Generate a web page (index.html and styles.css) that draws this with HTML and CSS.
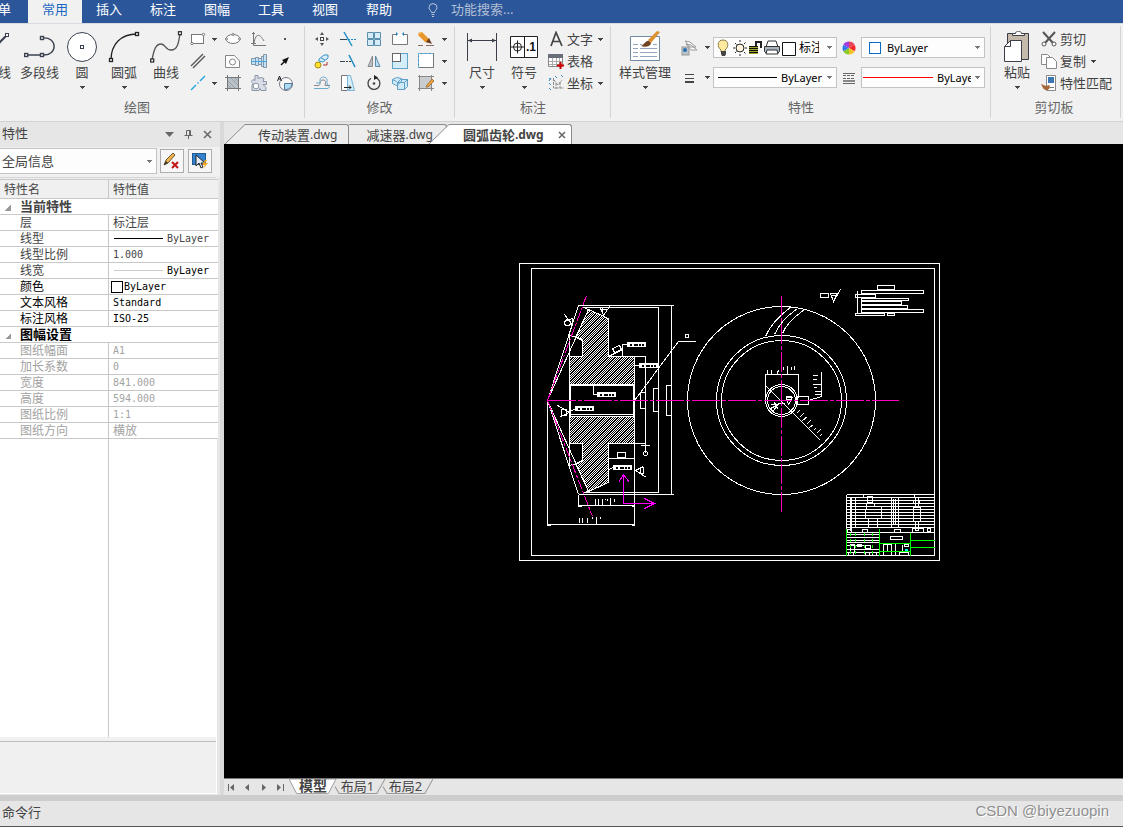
FILE: index.html
```html
<!DOCTYPE html>
<html lang="zh-CN">
<head>
<meta charset="utf-8">
<title>圆弧齿轮.dwg</title>
<link rel="stylesheet" href="styles.css">
</head>
<body>
<svg class="defs" aria-hidden="true">
  <symbol id="caret" viewBox="0 0 5 3"><path d="M0 0h5v1h-1v1h-1v1h-1v-1h-1v-1h-1z" fill="currentColor"/></symbol>
</svg>
<header class="menubar">
  <nav class="menu" aria-label="菜单">
    <button class="menu-item menu-file">单</button>
    <button class="menu-item active">常用</button>
    <button class="menu-item">插入</button>
    <button class="menu-item">标注</button>
    <button class="menu-item">图幅</button>
    <button class="menu-item">工具</button>
    <button class="menu-item">视图</button>
    <button class="menu-item">帮助</button>
  </nav>
  <label class="search">
    <svg width="10" height="14" viewBox="0 0 10 14" fill="none" stroke="#b9c4d8"><path d="M3.5 9.5C3.5 7.5 1 7 1 4.600A4 4 0 0 1 9 4.600C9 7 6.500 7.500 6.500 9.500zM3.500 11.500h3M4 13.500h2"/></svg>
    <input type="text" placeholder="功能搜索..." aria-label="功能搜索">
  </label>
</header>

<section class="ribbon">
  <div class="group group-draw">
    <div class="tools">
      <button class="big first-line"><svg width="32" height="32" fill="none" stroke="#3b4350"><path d="M2 30L28 4" stroke-width="2"/><rect x="26.500" y="2.500" width="3" height="3" fill="#fff"/></svg><span>线</span></button>
      <button class="big wide-line"><svg width="32" height="32" fill="none" stroke="#3b4350" stroke-width="1.400"><path d="M18 7C34 5 34 25 19 24H3"/><g fill="#fff"><rect x="16.500" y="5.500" width="3" height="3"/><rect x="16.500" y="22.500" width="3" height="3"/><rect x="0.700" y="22.500" width="3" height="3"/></g></svg><span>多段线</span></button>
      <button class="big"><svg width="32" height="32" fill="#fff" stroke="#3b4350"><circle cx="16" cy="16" r="14.500"/><rect x="14.500" y="14.500" width="3" height="3"/></svg><span>圆</span><svg class="caret"><use href="#caret"/></svg></button>
      <button class="big"><svg width="32" height="32" fill="none" stroke="#222" stroke-width="1.300"><path d="M3 29C3 13 13 3 29 3"/><g fill="#fff"><rect x="27.500" y="1.500" width="3" height="3"/><rect x="1.500" y="27.500" width="3" height="3"/></g></svg><span>圆弧</span><svg class="caret"><use href="#caret"/></svg></button>
      <button class="big"><svg width="32" height="32" fill="none" stroke="#555" stroke-width="1.300"><path d="M2 29C4 18 6 13 11 13C16 13 15 19 21 19C28 19 29 10 30 2"/><g fill="#fff" stroke="#333"><rect x="28.500" y="0.700" width="3" height="3"/><rect x="0.700" y="28" width="3" height="3"/></g></svg><span>曲线</span><svg class="caret"><use href="#caret"/></svg></button>
      <div class="icons icons-draw">
        <button aria-label="矩形"><svg width="16" height="16" fill="#fff" stroke="#777"><rect x="1.500" y="3.500" width="12" height="9"/><circle cx="13.500" cy="3.500" r="1.200"/><circle cx="2" cy="12.500" r="1.200"/></svg></button>
        <button aria-label="矩形选项"><svg class="caret"><use href="#caret"/></svg></button>
        <button aria-label="椭圆"><svg width="16" height="16" fill="#fff" stroke="#777"><ellipse cx="8" cy="8" rx="7" ry="4.500"/><circle cx="8" cy="3.500" r="1"/><circle cx="1.500" cy="8" r="1"/><circle cx="14.500" cy="8" r="1"/></svg></button>
        <button aria-label="函数曲线"><svg width="16" height="16" fill="none" stroke="#777"><path d="M2.500 1v13.500H15M0 12.500h5M1 2.500h3M3 12C5 1 9 3 13 10"/></svg></button>
        <button aria-label="点"><svg width="16" height="16"><rect x="7" y="7" width="2" height="2" fill="#555"/></svg></button>

        <button aria-label="平行线"><svg width="16" height="16" fill="none" stroke="#555" stroke-width="1.400"><path d="M1 13L13 1M3 15L15 3"/></svg></button>
        <span></span>
        <button aria-label="轮廓孔"><svg width="16" height="16" fill="#fff" stroke="#888"><path d="M.500 2.500v12h14V8L9.500 2.500z"/><circle cx="7.500" cy="9" r="3"/></svg></button>
        <button aria-label="轴孔"><svg width="16" height="16" fill="#c4e2f6" stroke="#8296aa"><path d="M.500 5.500h4v6h-4zM4.500 4.500h3v8h-3zM7.500 5.500h3v6h-3zM10.500 3.500h2v10h-2zM12.500 1.500h3v13h-3z"/><path d="M0 8.500h16" stroke="#4aa5df"/></svg></button>
        <button aria-label="箭头"><svg width="16" height="16"><path d="M4 12L9 7" stroke="#111" stroke-width="1.500"/><path d="M12 4l-7 3 4 4z" fill="#111"/></svg></button>

        <button aria-label="中心线"><svg width="16" height="16" stroke="#23a3dd" stroke-width="1.400"><path d="M1 15L6 10M7.500 8.500l1-1M10 6l5-5"/></svg></button>
        <button aria-label="中心线选项"><svg class="caret"><use href="#caret"/></svg></button>
        <button aria-label="剖面线"><svg width="16" height="16" fill="#b9c2c8" stroke="#777"><rect x="2.500" y="2.500" width="11" height="11"/><path d="M0 2.500h16M0 13.500h16M2.500 0v16M13.500 0v16"/><path d="M3 6l7 7M6 3l7 7M3 10l3 3M10 3l3 3" stroke="#959fa6"/></svg></button>
        <button aria-label="齿轮"><svg width="16" height="16" fill="#d8dde8" stroke="#8b94a3"><path d="M4 .500h3v3l3-1 3 1-1 3h3.500v3H12l3 3v3h-5l-1-2-1 2H1v-5l1-2-2-2 2-2 2 1z"/><circle cx="5" cy="11" r="2.800" fill="#fff"/></svg></button>
        <button aria-label="局部放大"><svg width="16" height="16" fill="#f8f8f8" stroke="#778"><circle cx="9" cy="9" r="6.500"/><path d="M7.500 8.500h7.500c0 4-4 6.500-7.500 6z" fill="#addcf5" stroke="#579"/><path d="M.500 6l2-5 2 5M1.500 4h2" fill="none" stroke="#222"/></svg></button>
      </div>
    </div>
    <h2>绘图</h2>
  </div>

  <div class="group group-modify">
    <div class="tools">
      <div class="icons icons-modify">
        <button aria-label="平移"><svg width="16" height="16" fill="#555"><path d="M6 4l2-3 2 3zM6 12l2 3 2-3zM4 6L1 8l3 2zM12 6l3 2-3 2z"/><rect x="6.500" y="6.500" width="3" height="3" fill="#fff" stroke="#444"/></svg></button>
        <button aria-label="裁剪"><svg width="16" height="16" stroke="#1d8dc7" fill="none"><path d="M4 1l8 14" stroke-width="1.500"/><path d="M0 8.500h7" stroke="#345"/><path d="M8 8.500h8" stroke-dasharray="2 1"/></svg></button>
        <button aria-label="阵列"><svg width="16" height="16" fill="#d7ecf8" stroke="#5b8fae"><path d="M1.500 1.500h6v6h-6zM8.500 1.500h6v6h-6zM1.500 8.500h6v6h-6zM8.500 8.500h6v6h-6z"/></svg></button>
        <button aria-label="打断"><svg width="16" height="16" fill="#fff" stroke="#777"><path d="M4 3.500H.500v10h15v-10H12"/><path d="M4 1v4l2-2zM12 1v4l-2-2z" fill="#1a7fc0" stroke="none"/></svg></button>
        <button aria-label="删除"><svg width="16" height="16"><path d="M1 1l3 0 8 8-2 3-3-1L0 4z" fill="#e9962b"/><path d="M8 11l3-4 3 6z" fill="#6b3f22"/><path d="M0 4l1-3h3" fill="#f3c782"/><path d="M0 14.500h5M8 14.500h8" stroke="#8b6c62"/></svg></button>
        <button aria-label="删除选项"><svg class="caret"><use href="#caret"/></svg></button>

        <button aria-label="平移复制"><svg width="16" height="16" fill="none"><circle cx="4" cy="12" r="3" fill="#ffe02d" stroke="#a98b13"/><path d="M5 6l5-4 4 0 0 3-5 4-4-1zM7 5l4 2" fill="#d7eefa" stroke="#3b93c4"/><path d="M9 12h4V9" stroke="#a33"/></svg></button>
        <button aria-label="延伸"><svg width="16" height="16" fill="none"><path d="M0 8.500h5" stroke="#345"/><path d="M6 8.500h6" stroke="#345" stroke-dasharray="2 1"/><path d="M9 2l6 12" stroke="#1d8dc7" stroke-width="1.500"/></svg></button>
        <button aria-label="镜像"><svg width="16" height="16"><path d="M6.500 3v10.500H2z" fill="#bcc3ca" stroke="#888"/><path d="M9.500 3v10.500H14z" fill="#b9dcf0" stroke="#5c8baa"/></svg></button>
        <button aria-label="缩放"><svg width="16" height="16"><rect x=".5" y=".5" width="15" height="15" fill="#d3edfa" stroke="#61a3c9"/><rect x=".5" y=".5" width="8" height="8" fill="#fff" stroke="#666"/></svg></button>
        <button aria-label="矩形边"><svg width="16" height="16"><rect x=".5" y=".5" width="15" height="14" fill="#fff" stroke="#777"/><path d="M0 .5h16M.5 0v15" stroke="#5bb5e5" stroke-dasharray="3 1"/></svg></button>
        <button aria-label="边选项"><svg class="caret"><use href="#caret"/></svg></button>

        <button aria-label="等距线"><svg width="16" height="16" fill="none"><path d="M0 10.500h5C7 9 5 5 9 5s2 4 2 5.500h5" stroke="#888"/><path d="M0 13.500h13c3 0 3-4 0-4V5c0-4-7-4-7 0v3H2" stroke="#6aaace"/></svg></button>
        <button aria-label="拉伸"><svg width="16" height="16"><path d="M1.500.500h6v15h-6z" fill="#fff" stroke="#777"/><path d="M7.500.500h3l4 15h-7z" fill="#d3edfa" stroke="#79b5d7"/><path d="M4 12.500h7M9 10.500l2 2-2 2" stroke="#222" fill="none"/></svg></button>
        <button aria-label="旋转"><svg width="16" height="16" fill="none" stroke="#444" stroke-width="1.300"><path d="M9 2.500a6 6 0 1 1-4 .700"/><path d="M8 0l4 2.500L8 5z" fill="#222" stroke="none"/><circle cx="8" cy="8.500" r=".7"/></svg></button>
        <button aria-label="三维"><svg width="16" height="16" fill="#cfe9f7" stroke="#5d9fc6"><path d="M.500 4.500l4-2 5 1v3l-5 4-4-2zM5.500 7.500l3-3h7v7l-3 3h-7z"/><path d="M5.500 7.500h7l3-3M12.500 7.500v7M.500 4.500l4 2" fill="none"/></svg></button>
        <button aria-label="填充编辑"><svg width="16" height="16"><rect x="1.500" y="1.500" width="12" height="12" fill="#c9cdd0" stroke="#666"/><path d="M0 1.500h16M0 13.500h16M1.500 0v16M13.500 0v16" stroke="#888"/><path d="M9 10l5-6 2 2-6 6-2 0z" fill="#eba43e" stroke="#a87840"/></svg></button>
        <button aria-label="填充选项"><svg class="caret"><use href="#caret"/></svg></button>
      </div>
    </div>
    <h2>修改</h2>
  </div>

  <div class="group group-dim">
    <div class="tools">
      <button class="big"><svg width="32" height="32" stroke="#3a3f48" fill="#3a3f48"><path d="M1.500 2v28M30.500 2v28M2 9.500h28"/><path d="M2 9.500l4-2v4zM30 9.500l-4-2v4z" stroke="none"/></svg><span>尺寸</span><svg class="caret"><use href="#caret"/></svg></button>
      <button class="big"><svg width="32" height="32" fill="#fff" stroke="#222"><path d="M2.500 5.500h27v21h-27zM16.500 5.500v21"/><circle cx="9.500" cy="16" r="4"/><path d="M3 16h13M9.500 9.500v13"/><text class="dot-one" x="18" y="20" stroke="none" fill="#111">.1</text></svg><span>符号</span><svg class="caret"><use href="#caret"/></svg></button>
      <div class="list">
        <button><svg width="16" height="16" fill="none" stroke="#444" stroke-width="1.700"><path d="M3 15L8 1.500 14 15M5 10.500h7"/></svg>文字<svg class="caret"><use href="#caret"/></svg></button>
        <button><svg width="16" height="16"><path d="M.500 1.500h14v12h-14z" fill="#fff" stroke="#888"/><path d="M0 1h15v4H0z" fill="#686e78"/><path d="M1 8.500h13M1 11.500h13M4.500 5v8M8.500 5v8M11.500 5v8" stroke="#aaa"/><path d="M12.500 9v7M9 12.500h7" stroke="#c00" stroke-width="2"/></svg>表格</button>
        <button><svg width="16" height="16" fill="none" stroke="#888"><path d="M5.500 3v10H16M6 5l4 5 4-5M8 8v6M12 7v6" stroke-dasharray="3 1"/><path d="M1 3l2 2M3 3L1 6M7 1l2 2M13 0l2 2M1 8l2 2M1 13l2 2" stroke="#3c8fc6"/></svg>坐标<svg class="caret"><use href="#caret"/></svg></button>
      </div>
    </div>
    <h2>标注</h2>
  </div>

  <div class="group group-props">
    <div class="tools">
      <button class="big style-btn"><svg width="32" height="32"><path d="M1.500 5.500h29v24h-29z" fill="#fff" stroke="#718ba5"/><path d="M4 13.500h5M4 17.500h5M4 21.500h5M4 25.500h5M11 21.500h17M11 25.500h17M11 17.500h17M11 13.500h2M24 13.500h4" stroke="#94a5bd"/><path d="M28 0l3 1-9 11-3-3z" fill="#dc9132"/><path d="M12 15c3-1 5-6 8-5l2 2c0 3-6 5-10 3z" fill="#714523"/></svg><span>样式管理</span><svg class="caret"><use href="#caret"/></svg></button>
      <div class="combo-grid">
        <button aria-label="图层"><svg width="16" height="16"><path d="M4 1l5 1 6 5-6 0zM5 4l5 1 6 5h-6z" fill="#fff" stroke="#999"/><rect x="1" y="7" width="7" height="8" fill="#b9c3cc" stroke="#999"/><circle cx="4" cy="10" r="2" fill="#2b6fae"/></svg></button>
        <button aria-label="图层选项"><svg class="caret"><use href="#caret"/></svg></button>
        <div class="combo">
          <svg width="82" height="18">
            <path d="M7 11C3 8 3 1 9 1s6 7 2 10v2H7z" fill="#ffeaa0" stroke="#8b7c46"/><path d="M7 12h5v3l-1 2H8l-1-2z" fill="#444"/>
            <g stroke="#222"><circle cx="26" cy="9" r="4" fill="#fff4dd"/><path d="M26 1v2M26 15v2M19 9h2M31 9h2M21 4l1.500 1.500M30 13l1.500 1.500M21 14l1.500-1.500M30 5l1.500-1.500"/></g>
            <path d="M35 7h9v8h-9z" fill="#a0a52a"/><path d="M35 7.500h9M35 9.500h9M35 11.500h9M35 13.500h9" stroke="#111"/><path d="M42 7V3h5v6" stroke="#222" stroke-width="2" fill="none"/>
            <g stroke="#333"><path d="M54 2h8l2 6H52z" fill="#fff"/><path d="M50.500 7.500h15v5l-2 2h-11l-2-2z" fill="#a9b4bf"/><path d="M53 11h10l1 4H52z" fill="#fff"/></g>
            <path d="M68.500 3.500h13v13h-13z" fill="#fff" stroke="#111"/>
          </svg>
          <select class="layer-name" aria-label="当前图层"><option>标注层</option></select><svg class="caret"><use href="#caret"/></svg>
        </div>
        <svg class="mid" width="16" height="16"><g stroke="none"><path d="M8 8V1.500a6.500 6.500 0 0 1 5.600 3.250z" fill="#e8445b"/><path d="M8 8l5.600-3.250a6.500 6.500 0 0 1 0 6.500z" fill="#f3262b"/><path d="M8 8l5.600 3.250A6.500 6.500 0 0 1 8 14.500z" fill="#f5c326"/><path d="M8 8v6.500a6.500 6.500 0 0 1-5.600-3.250z" fill="#8bcc28"/><path d="M8 8l-5.600 3.250a6.500 6.500 0 0 1 0-6.500z" fill="#3279e8"/><path d="M8 8L2.400 4.750A6.500 6.500 0 0 1 8 1.500z" fill="#a23be0"/></g></svg>
        <div class="combo color-combo"><i class="swatch"></i><select aria-label="颜色"><option>ByLayer</option></select><svg class="caret"><use href="#caret"/></svg></div>

        <button aria-label="线型"><svg width="16" height="16" stroke="#444"><path d="M4 4.500h9M4 8.500h9" /><path d="M4 12h9" stroke-width="2"/></svg></button>
        <button aria-label="线型选项"><svg class="caret"><use href="#caret"/></svg></button>
        <div class="combo line-combo"><i class="line line-black"></i><select aria-label="当前线型"><option>ByLayer</option></select><svg class="caret"><use href="#caret"/></svg></div>
        <svg class="mid" width="16" height="16" stroke="#666"><path d="M2 3.500h12M2 13.500h12" stroke-width="1"/><path d="M2 5.500h12M2 8.500h12" stroke-dasharray="3 1"/><path d="M2 11h12" stroke-width="2" stroke="#888"/></svg>
        <div class="combo weight-combo"><i class="line line-red"></i><select aria-label="线宽"><option>ByLayer</option></select><svg class="caret"><use href="#caret"/></svg></div>
      </div>
    </div>
    <h2>特性</h2>
  </div>

  <div class="group group-clip">
    <div class="tools">
      <button class="big"><svg width="32" height="32" stroke="#3a3f48"><path d="M6.500 2.500h21v26h-21z" fill="#c5b9ac"/><path d="M11.500 4.500v-2h3c0-3 6-3 6 0h3v2z" fill="#fff"/><path d="M9.500 9.500h11v21h-17v-15z" fill="#fff"/><path d="M9.500 9.500v6h-6" fill="none"/></svg><span>粘贴</span><svg class="caret"><use href="#caret"/></svg></button>
      <div class="list">
        <button><svg width="16" height="16" fill="#fff" stroke="#555"><path d="M2 1l10 11M14 1L4 12" stroke-width="2"/><circle cx="3" cy="13" r="2"/><circle cx="13" cy="13" r="2"/></svg>剪切</button>
        <button><svg width="16" height="16" fill="#fff" stroke="#888"><path d="M.500 1.500h6l3 3v7h-9z"/><path d="M5.500 4.500h6l4 4v7h-10z"/></svg>复制<svg class="caret"><use href="#caret"/></svg></button>
        <button><svg width="16" height="16"><path d="M5.500.500h9v15h-9z" fill="#fff" stroke="#888"/><path d="M7 2h6v6H7z" fill="#3b77b4"/><path d="M9 12.500h4" stroke="#777"/><path d="M0 9l5 2 3-1 1 2c-1 4-5 4-7 1z" fill="#a6683a"/></svg>特性匹配</button>
      </div>
    </div>
    <h2>剪切板</h2>
  </div>
</section>

<main class="workspace">
  <aside class="panel">
    <div class="panel-head">
      <h1>特性</h1>
      <button aria-label="菜单"><svg width="9" height="5"><path d="M0 0h9L4.500 5z" fill="#666"/></svg></button>
      <button aria-label="固定"><svg width="9" height="9" fill="none" stroke="#666"><path d="M2.500.500h4v5h-4zM.500 5.500h8M4.500 6v3M5.500 1v4"/></svg></button>
      <button aria-label="关闭"><svg width="9" height="9" stroke="#666" stroke-width="1.500"><path d="M1 1l7 7M8 1L1 8"/></svg></button>
    </div>
    <div class="panel-tools">
      <div class="combo scope"><select aria-label="选择范围"><option>全局信息</option></select><svg class="caret"><use href="#caret"/></svg></div>
      <button aria-label="清除选择"><svg width="18" height="18"><path d="M1 13l2-5 7-7 2 2-7 8z" fill="#efb54b" stroke="#6d5430"/><path d="M1 13l2-4 2 2z" fill="#333"/><path d="M9 10l6 6M15 10l-6 6" stroke="#c01818" stroke-width="2"/></svg></button>
      <button aria-label="拾取"><svg width="18" height="18"><rect x="1.500" y="1.500" width="13" height="11" fill="#3382cf" stroke="#225a92"/><path d="M5 3v11l3-3 2 5 2-1-2-4h4z" fill="#e4eef9" stroke="#222"/><path d="M14 8l-3 5h3l-2 4 5-6h-3l2-3z" fill="#f4a31c"/></svg></button>
    </div>
    <div class="props">
      <table>
        <thead><tr><th>特性名</th><th>特性值</th></tr></thead>
        <tbody>
          <tr class="section"><th colspan="2"><i></i>当前特性</th></tr>
          <tr><th>层</th><td>标注层</td></tr>
          <tr><th>线型</th><td><span class="sample"><i></i><b>ByLayer</b></span></td></tr>
          <tr><th>线型比例</th><td><b>1.000</b></td></tr>
          <tr class="dark-value"><th>线宽</th><td><span class="sample pale"><i></i><b>ByLayer</b></span></td></tr>
          <tr class="dark"><th>颜色</th><td><span class="color"><i></i><b>ByLayer</b></span></td></tr>
          <tr class="dark"><th>文本风格</th><td><b>Standard</b></td></tr>
          <tr class="dark"><th>标注风格</th><td><b>ISO-25</b></td></tr>
        </tbody>
        <tbody class="muted">
          <tr class="section dark"><th colspan="2"><i></i>图幅设置</th></tr>
          <tr><th>图纸幅面</th><td><b>A1</b></td></tr>
          <tr><th>加长系数</th><td><b>0</b></td></tr>
          <tr><th>宽度</th><td><b>841.000</b></td></tr>
          <tr><th>高度</th><td><b>594.000</b></td></tr>
          <tr><th>图纸比例</th><td><b>1:1</b></td></tr>
          <tr><th>图纸方向</th><td>横放</td></tr>
        </tbody>
      </table>
      <div class="filler"><div></div></div>
      <div class="description"></div>
    </div>
  </aside>

  <section class="documents">
    <div class="doc-tabs" role="tablist">
      <button class="doc-tab" role="tab"><svg width="20" height="20"><path d="M0 20L20 .500V20z" fill="#ededed"/><path d="M0 20L20 .500" stroke="#8c8c8c"/></svg><span>传动装置<small>.dwg</small></span></button>
      <button class="doc-tab second" role="tab"><span>减速器<small>.dwg</small></span></button>
      <button class="doc-tab current" role="tab"><svg width="20" height="20"><path d="M0 20L20 .500V20z" fill="#fff"/><path d="M0 20L20 .500" stroke="#8c8c8c"/></svg><span>圆弧齿轮<small>.dwg</small><svg width="8" height="8" stroke="#666" stroke-width="1.500"><path d="M1 1l6 6M7 1L1 7"/></svg></span></button>
    </div>

    <div class="canvas">
      <svg class="drawing" viewBox="224 144 899 634" fill="none" stroke="#fff" shape-rendering="crispEdges" role="img" aria-label="圆弧齿轮图纸">
        <defs>
          <pattern id="hatch" width="7" height="7" patternUnits="userSpaceOnUse" patternTransform="translate(-.5 -.5)">
            <path fill="#fff" stroke="none" d="M0 0h1v1h-1zM6 1h1v1h-1zM5 2h1v1h-1zM4 3h1v1h-1zM3 4h1v1h-1zM2 5h1v1h-1zM1 6h1v1h-1z"/>
            <path fill="#fff" stroke="none" d="M2 0h1v1h-1zM1 1h1v1h-1zM0 2h1v1h-1zM6 3h1v1h-1zM5 4h1v1h-1zM4 5h1v1h-1zM3 6h1v1h-1zM4 0h1v1h-1zM3 1h1v1h-1zM2 2h1v1h-1zM1 3h1v1h-1zM0 4h1v1h-1zM6 5h1v1h-1zM5 6h1v1h-1z"/>
          </pattern>
          <g id="tag"><rect width="18" height="4" fill="#fff"/><path d="M2 2h2M6 2h4M11 2h2M14 2h2" stroke="#000" stroke-width="2"/></g>
        </defs>
        <g transform="translate(.5 .5)">
          <rect x="519" y="263" width="420" height="297"/><rect x="531" y="268" width="403" height="287"/>
          <!-- gear section -->
          <path fill="url(#hatch)" d="M588 309L608 318V356H634V384H569V356H582V340L575 337z"/>
          <path fill="url(#hatch)" d="M588 491L608 482V443H634V416H569V443H582V460L575 463z"/>
          <path d="M578 305H673M671 305V494M578 494H673M583 307H658V492H583M578 305L547 400L578 494M588 309L547 400L588 491M583 307L588 309M583 492L588 491"/>
          <path d="M569 335V465M569 335L580 338L582 341V356H569M569 465L580 462L582 459V443H569"/>
          <path d="M569 385H634M569 414H634M570 384V415M633 384V415"/>
          <path d="M634 356V524M634 356H645V443H608M608 458H634M608 443V482"/>
          <path d="M645 392H640V408H645M658 388H653V411H658M671 385H666V415H671"/>
          <path d="M634 400L678 341H695M685 334h3v3h-3z"/>
          <path d="M608 356L622 349V344H627M622 344V356M612 348L619 345L621 349L614 352zM634 365H639M593 385V394H597M570 411L575 408M608 469L613 467"/>
          <use href="#tag" x="627" y="342"/><use href="#tag" x="639" y="363"/><use href="#tag" x="597" y="392"/><use href="#tag" x="575" y="406"/><use href="#tag" x="613" y="465"/>
          <circle cx="567" cy="322" r="3"/><path d="M564 314L572 325V318L564 321M600 307L603 315L609 306M599 309H606M602 307V312M557 405L569 412L560 416M561 409H566V415H561zM635 470L646 477M635 470L643 466M640 467H643V473H640z"/>
          <path d="M617 452h8v5h-8zM640 445H649M645 443V452"/><circle cx="645" cy="453" r="2"/>
          <path d="M578 494V506M578 505H634M547 400V525M547 524H634M547 525H550M631 525H634M578 506H581M631 506H634"/>
          <path d="M595 498V504M598 498V504M602 498V504M607 498V500M610 497V504M614 498V501M579 517V522M582 517V522M587 517V522M592 516V518M596 516V524M600 516V518M605 498V499"/>
          <!-- front view -->
          <circle cx="781" cy="400" r="94"/><circle cx="781" cy="400" r="65"/><circle cx="781" cy="400" r="60"/><circle cx="781" cy="400" r="16"/><circle cx="781" cy="400" r="14"/>
          <path d="M765 336Q771 321 791 306M774 334Q780 320 797 308M782 333Q786 322 804 309"/>
          <path d="M765 400V374H798V397M796 396h12v8h-12zM821 371V396L808 400M766 386L820 440"/>
          <path d="M767 369V373M771 369V373M777 370V373M778 369V371M783 366V369M787 365V373M791 366V369M794 365V369M812 375H817M812 379H816M812 384H821M813 387H816M814 391H820M814 394H820"/>
          <path d="M796 413L799 410M799 417L803 413M802 420L807 416M806 424L810 420M809 427L813 424M813 430L815 428M816 433L820 429M819 436L821 434M770 408L778 404L772 411zM774 402L778 409M786 397H792L788 404zM771 404L785 403M786 396h5v3h-5z"/>
          <g stroke="#ff00c0"><path d="M547 400H898" stroke-dasharray="28 2 4 2"/><path d="M781 295V513" stroke-dasharray="20 2 4 2"/><path d="M547 400L586 295M547 400L592 516" stroke-dasharray="10 2 3 2"/></g>
          <g stroke="#ff00ff"><path d="M623 474V503H653M618 482L623 474L629 482M644 498L654 503L644 508"/></g>
          <!-- notes -->
          <path d="M820 293h8v4h-8zM830 293H837L833 301zM833 301L840 289M831 295H836"/>
          <path d="M877 285h17v4h-17zM861 290h62v3h-62zM855 294h20v3h-20zM861 298h47v2h-47zM861 301h40v3h-40zM861 305h46v3h-46zM861 309h62v3h-62zM855 313h29v2h-29zM887 313h7v2h-7zM857 290V312"/>
          <!-- title block -->
          <path d="M846 494H934M846 497H934M846 500H934M846 503H934M846 506H934M846 509H934M846 512H934M846 515H934M846 518H934M846 521H934M846 524H934M846 527H934M846 532H934M846 494V528"/>
          <path d="M850 497V530M851 497V530M855 497V527M863 494V497M867 496h5v6h-5zM866 503V508M865 509V518M881 506V518M868 518V527M877 518V527M874 503V506M891 497V527M893 498V524M895 498V524M898 497V527M914 494V497M913 500h6v3h-6zM915 497h3v9h-3zM913 507h7v14h-7zM915 521h3v9h-3zM912 528h11v4h-11zM927 528h3v3h-3zM894 529h6v3h-6zM862 529h5v3h-5zM847 529h4v3h-4z"/>
          <path d="M846 534H879M846 537H879M846 540H879M846 542H879M846 545H863M846 549H879M846 552H879M890 536h12v3h-12zM850 544h4v8h-4zM848 552h5v3h-5zM857 544h4v2h-4zM865 545h5v3h-5zM865 552h4v3h-4zM872 552h4v3h-4zM883 544h8v11h-8zM887 544V551M895 543V555M902 544V552M899 552h9v3h-9zM904 544h4v2h-4z"/>
          <g stroke="#0f0"><path d="M846 528V555M879 528V555M910 532V555M910 540H934M910 547H934M879 543H910M879 551H910"/><path d="M850 532V555M855 532V555M864 532V555M872 532V555" stroke-dasharray="3 3"/></g>
          <path d="M904 549H907" stroke="#0ff" stroke-width="2"/>
        </g>
      </svg>
    </div>

    <div class="layout-bar">
      <div class="pager">
        <button aria-label="首个"><svg width="8" height="7" fill="#666"><path d="M0 0h1v7H0zM6 0v7L2 3.500z"/></svg></button>
        <button aria-label="上一个"><svg width="8" height="7" fill="#666"><path d="M5 0v7L1 3.500z"/></svg></button>
        <button aria-label="下一个"><svg width="8" height="7" fill="#666"><path d="M2 0v7l4-3.500z"/></svg></button>
        <button aria-label="末个"><svg width="8" height="7" fill="#666"><path d="M1 0v7l4-3.500zM7 0h1v7H7z"/></svg></button>
      </div>
      <button class="layout current"><svg viewBox="0 0 50 17" preserveAspectRatio="none"><path d="M0 0L8 15.500H41L49 0z"/></svg>模型</button>
      <button class="layout"><svg viewBox="0 0 50 17" preserveAspectRatio="none"><path d="M1 8L5 15.500H42L50 0"/></svg>布局1</button>
      <button class="layout"><svg viewBox="0 0 50 17" preserveAspectRatio="none"><path d="M1 8L5 15.500H42L50 0"/></svg>布局2</button>
    </div>
  </section>
</main>

<footer class="command">
  <span>命令行</span>
  <span class="credit">CSDN @biyezuopin</span>
</footer>
</body>
</html>
```
FILE: styles.css
```css
* { box-sizing: border-box; }

body {
  margin: 0;
  height: 100vh;
  display: flex;
  flex-direction: column;
  overflow: hidden;
  background: #f0f0f0;
  color: #444;
  font: 13px/18px "Noto Sans", "Noto Sans CJK SC", sans-serif;
}

button, input, select {
  margin: 0;
  padding: 0;
  border: 0;
  background: none;
  color: inherit;
  font: inherit;
}

button { display: flex; align-items: center; justify-content: center; white-space: nowrap; }
h1, h2 { margin: 0; font: inherit; }
svg { display: block; flex: none; }
.defs { width: 0; height: 0; position: absolute; }
.caret { width: 5px; height: 3px; color: #444; }

/* Menu bar */
.menubar { display: flex; height: 23px; background: #2b579a; color: #fff; }
.menu { display: flex; }
.menu-item { width: 54px; height: 23px; padding-bottom: 6px; }
.menu-file { width: 28px; justify-content: flex-end; padding-right: 17px; }
.menu-item.active { background: #f1f1f1; color: #1a66c0; }
.search { display: flex; align-items: center; gap: 13px; margin-left: 22px; padding-bottom: 4px; }
.search input { width: 160px; height: 18px; padding-bottom: 2px; }
.search input::placeholder { color: #b3bfd4; opacity: 1; }

/* Ribbon */
.ribbon {
  display: flex;
  padding: 2px 0 3px;
  border-top: 1px solid #d8dce2;
  border-bottom: 1px solid #d2d2d2;
  background: #f1f1f1;
}
.group { flex: none; padding-top: 2px; border-right: 1px solid #d4d4d4; }
.group h2 { margin-top: 4px; height: 20px; text-align: center; color: #666; }
.tools { display: flex; height: 66px; }
.group-draw { margin-left: -32px; padding-left: 8px; padding-right: 6px; }
.group-modify { padding-left: 4px; padding-right: 4px; }
.group-dim { padding-left: 6px; padding-right: 5px; }
.group-props { padding-left: 6px; padding-right: 5px; }
.group-clip { padding-left: 5px; padding-right: 8px; }

.big { width: 42px; flex-direction: column; justify-content: flex-start; padding-top: 3px; }
.wide-line { width: 43px; }
.first-line { align-items: flex-end; padding-right: 7px; }
.style-btn { width: 56px; }
.big .caret { margin-top: 5px; }
.dot-one { font: bold 12px "Liberation Sans", sans-serif; }

.icons { display: grid; grid-template-rows: repeat(3, 22px); }
.icons-draw { grid-template-columns: 22px 11px 26px 26px 26px; }
.icons-modify { grid-template-columns: repeat(5, 26px) 11px; }

.list { display: grid; grid-template-rows: repeat(3, 22px); margin-left: 3px; }
.list button { justify-content: flex-start; gap: 3px; }
.list .caret { margin: 0 2px; }

.combo-grid {
  display: grid;
  grid-template-columns: 16px 16px 124px 24px 124px;
  grid-template-rows: 21px 21px;
  row-gap: 9px;
  margin: 9px 0 0 8px;
  align-content: start;
}
.combo-grid > button:nth-child(5n + 2) { padding-left: 4px; }
.combo-grid .mid { align-self: center; justify-self: center; }
.combo {
  display: flex;
  align-items: center;
  min-width: 0;
  border: 1px solid #c3c3c3;
  background: #fdfdfd;
  color: #000;
}
.combo select {
  flex: 1;
  min-width: 0;
  height: 19px;
  appearance: none;
  overflow: hidden;
  text-overflow: clip;
}
.combo .caret { margin: 0 4px; color: #777; }
.combo-grid select { font-size: 11px; margin-left: 4px; }
.combo-grid .layer-name { font-size: 12px; margin-left: 3px; margin-right: 4px; }
.swatch { width: 12px; height: 12px; margin: 0 2px 0 7px; border: 1px solid #0a6cc0; background: #fff; }
.line { flex: none; height: 1px; }
.line-black { width: 59px; margin-left: 4px; background: #000; }
.line-red { width: 70px; margin-left: 1px; background: #f00; }

/* Work area */
.workspace { display: flex; flex: 1; min-height: 0; }
.panel {
  display: flex;
  flex-direction: column;
  flex: none;
  width: 224px;
  border-right: 4px solid #d9d9d9;
  background: #e6e6e6;
}
.panel-head { display: flex; align-items: center; gap: 10px; height: 25px; padding: 0 8px 0 2px; }
.panel-head h1 { flex: 1; padding-bottom: 3px; }
.panel-tools { display: flex; align-items: center; gap: 4px; height: 30px; padding: 0 8px 2px 0; background: #f0f0f0; }
.panel-tools button { width: 24px; height: 24px; border: 1px solid #adadad; background: #f7f7f7; }
.scope { flex: 1; height: 26px; border-left: 0; color: #444; }
.scope select { padding-left: 2px; padding-bottom: 3px; }
.scope + button { margin-left: -1px; }
.props {
  display: flex;
  flex: 1;
  flex-direction: column;
  min-height: 0;
  width: 217px;
  margin-bottom: 1px;
  padding-top: 1px;
  border-top: 1px solid #d5d5d5;
  border-right: 1px solid #fff;
  background: #f0f0f0;
}
.props table { border-spacing: 0; table-layout: fixed; width: 100%; background: #fff; font-size: 12px; line-height: 15px; }
.props th, .props td { height: 16px; padding: 0 0 0 4px; border: 0 solid #c8c8c8; border-bottom-width: 1px; font-weight: normal; text-align: left; white-space: nowrap; }
.props th { width: 109px; padding-left: 20px; border-right-width: 1px; }
.props td { width: auto; }
.props thead th { height: 20px; padding-left: 4px; border-top-width: 1px; background: #f0f0f0; }
.props thead th:last-child { border-right: 0; }
.props b { display: block; font: 10px/15px "DejaVu Sans Mono", monospace; }
.props .section th { padding-left: 5px; border-right: 0; font-size: 13px; font-weight: bold; }
.section i { display: inline-block; width: 6px; height: 6px; margin-right: 9px; background: linear-gradient(135deg, transparent 50%, #999 50%); }
.dark, .dark-value td { color: #000; }
.muted tr:not(.section) { color: #a3a3a3; }
.sample { display: flex; align-items: center; gap: 4px; }
.sample i { width: 49px; height: 1px; margin-left: 1px; background: #000; }
.sample.pale i { background: #ccc; }
.color { display: flex; align-items: center; gap: 1px; margin-left: -2px; }
.color i { width: 12px; height: 12px; border: 1px solid #000; }
.filler { flex: 1; background: #fff; }
.filler div { width: 109px; height: 100%; border-right: 1px solid #c8c8c8; }
.description { height: 53px; margin-top: 4px; border-top: 1px solid #bdbdbd; border-bottom: 1px solid #fff; }

.documents { display: flex; flex: 1; flex-direction: column; min-width: 0; }
.doc-tabs { display: flex; align-items: flex-end; height: 22px; background: #e6e6e6; }
.doc-tab { height: 20px; margin-left: 1px; }
.doc-tab small { font-size: 12px; }
.doc-tab > span {
  display: flex;
  align-items: center;
  height: 20px;
  padding: 0 11px 0 13px;
  border: 1px solid #8c8c8c;
  border-left: 0;
  border-bottom: 0;
  border-radius: 0 3px 0 0;
  background: #ededed;
}
.doc-tab.second { margin-left: 0; }
.doc-tab.second > span { padding: 0 13px 0 17px; }
.doc-tab.current { margin-left: -18px; }
.doc-tab.current > span { padding: 0 5px 0 14px; background: #fff; font-weight: bold; }
.doc-tab.current > span svg { margin-left: 14px; }
.canvas { flex: 1; min-height: 0; background: #000; }
.drawing { width: 100%; height: 100%; }

.layout-bar { display: flex; height: 17px; border-top: 1px solid #777; background: #e6e6e6; }
.pager { display: flex; width: 65px; padding-left: 0; }
.pager button { width: 16px; }
.layout { position: relative; width: 51px; height: 16px; margin-left: -3px; padding: 0 4px 3px 0; z-index: 0; }
.layout svg { position: absolute; inset: 0; width: 100%; height: 100%; z-index: -1; fill: none; stroke: #999; }
.layout.current { width: 48px; margin-left: 0; padding-right: 0; font-size: 14px; font-weight: bold; }
.layout.current svg { fill: #fff; }

.command {
  display: flex;
  justify-content: space-between;
  height: 32px;
  padding: 2px 14px 0 2px;
  border-top: 6px solid #cdcdcd;
  border-bottom: 1px solid #555;
  background: #e6e6e6;
}
.credit { color: #8f8f8f; font: 15px/16px "Liberation Sans", sans-serif; text-shadow: 1px 1px 0 #fff; }
```
